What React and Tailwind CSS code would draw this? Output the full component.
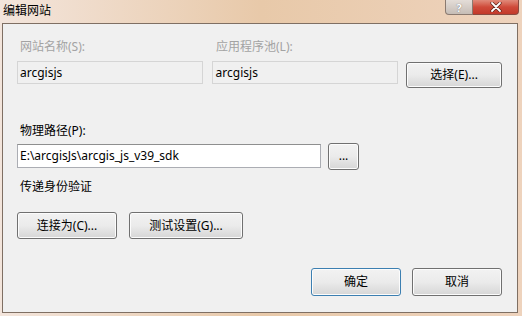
const font = { fontFamily: '"Noto Sans", "Noto Sans CJK SC", sans-serif' };

const WinButton = ({ children, className = "", primary = false }) => {
  return (
    <button
      className={
        "flex items-center justify-center rounded-[3px] border text-[12px] text-black bg-gradient-to-b from-[#f2f2f2] via-[#ebebeb] to-[#d6d6d6] shadow-[inset_0_0_0_1px_#fcfcfc] " +
        (primary ? "border-[#3c7fb1] shadow-[inset_0_0_0_1px_#bfe9f9] " : "border-[#707070] ") +
        className
      }
    >
      {children}
    </button>
  );
};

const App = () => {
  return (
    <div
      className="w-[522px] h-[316px] flex flex-col bg-gradient-to-r from-[#f3e5dc] via-[#e8c9a9] to-[#eed3bd] overflow-hidden"
      style={font}
    >
      {/* Title bar */}
      <div className="h-[23px] flex items-start justify-between pl-[3px]">
        <span className="text-[12px] leading-[16px] mt-[3px] text-black">编辑网站</span>
        <div className="flex mr-[3px]">
          <div className="w-[28px] h-[15px] rounded-bl-[4px] border border-t-0 border-[#8a7a70] bg-gradient-to-b from-[#e4ddd8] to-[#c6bdb6] flex items-center justify-center text-[11px] leading-none font-bold text-white [text-shadow:0_0_1px_#555]">
            ?
          </div>
          <div className="w-[46px] h-[15px] rounded-br-[4px] border border-t-0 border-l-0 border-[#8a4a40] bg-gradient-to-b from-[#e08a7a] via-[#cf4a3a] to-[#c23a2a] flex items-center justify-center">
            <svg width="12" height="10" viewBox="0 0 12 10">
              <path d="M2 1 L10 9 M10 1 L2 9" stroke="#5a2018" strokeWidth="3.2" strokeLinecap="round" />
              <path d="M2 1 L10 9 M10 1 L2 9" stroke="#ffffff" strokeWidth="1.8" strokeLinecap="round" />
            </svg>
          </div>
        </div>
      </div>

      {/* Client area */}
      <div className="ml-[2px] mr-[4px] mb-[3px] flex-1 border border-[#7f6f63] bg-[#f0f0f0] pl-[14px] pr-[15px] text-[12px] text-black">
        <div className="flex mt-[15px]">
          <div className="w-[186px] text-[#a3a3a3] leading-[16px] pl-[3px]">网站名称(S):</div>
          <div className="ml-[9px] text-[#a3a3a3] leading-[16px] pl-[4px]">应用程序池(L):</div>
        </div>
        <div className="flex items-start mt-[6px]">
          <div className="w-[186px] h-[23px] border border-[#d5d5d5] bg-[#f0f0f0] flex items-center pl-[2px] leading-none">
            arcgisjs
          </div>
          <div className="ml-[9px] w-[187px] h-[23px] border border-[#d5d5d5] bg-[#f0f0f0] flex items-center pl-[3px] leading-none">
            arcgisjs
          </div>
          <WinButton className="ml-[8px] w-[96px] h-[26px] mt-[1px]">选择(E)...</WinButton>
        </div>

        <div className="mt-[35px] leading-[16px] pl-[3px]">物理路径(P):</div>
        <div className="flex items-start mt-[5px]">
          <div className="w-[304px] h-[24px] border border-[#abadb3] border-t-[#8e8f8f] bg-white flex items-center pl-[2px] leading-none">
            E:\arcgisJs\arcgis_js_v39_sdk
          </div>
          <WinButton className="ml-[7px] w-[31px] h-[27px] -mt-[1px] text-[10px] pb-[2px]">...</WinButton>
        </div>
        <div className="mt-[9px] leading-[16px] pl-[3px]">传递身份验证</div>

        <div className="flex mt-[17px]">
          <WinButton className="w-[100px] h-[27px]">连接为(C)...</WinButton>
          <WinButton className="ml-[12px] w-[114px] h-[27px]">测试设置(G)...</WinButton>
        </div>

        <div className="flex justify-end mt-[29px]">
          <WinButton primary className="w-[90px] h-[28px]">确定</WinButton>
          <WinButton className="ml-[11px] w-[90px] h-[28px]">取消</WinButton>
        </div>
      </div>
    </div>
  );
};

export default App;
